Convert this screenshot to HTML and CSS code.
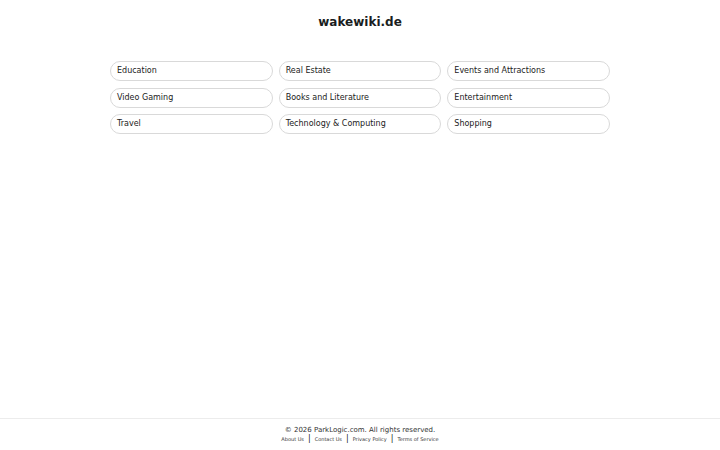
FILE: index.html
```html
<!DOCTYPE html>
<html lang="en">
  <head>
    <meta charset="UTF-8" />
    <meta name="viewport" content="width=device-width, initial-scale=1.0" />
    <title>wakewiki.de</title>
    <link rel="stylesheet" href="styles.css">
  </head>
  <body>
    <div class="page">
      <header class="header">
        <h1 class="domain">wakewiki.de</h1>
      </header>

      <main class="topics">
        <a class="topic" href="#">Education</a>
        <a class="topic" href="#">Real Estate</a>
        <a class="topic" href="#">Events and Attractions</a>
        <a class="topic" href="#">Video Gaming</a>
        <a class="topic" href="#">Books and Literature</a>
        <a class="topic" href="#">Entertainment</a>
        <a class="topic" href="#">Travel</a>
        <a class="topic" href="#">Technology &amp; Computing</a>
        <a class="topic" href="#">Shopping</a>
      </main>

      <footer class="footer">
        <p class="copyright">&copy; 2026 ParkLogic.com. All rights reserved.</p>
        <nav class="footer-links">
          <a href="#">About Us</a>
          <span class="sep">|</span>
          <a href="#">Contact Us</a>
          <span class="sep">|</span>
          <a href="#">Privacy Policy</a>
          <span class="sep">|</span>
          <a href="#">Terms of Service</a>
        </nav>
      </footer>
    </div>
  </body>
</html>
```

FILE: styles.css
```css
html,
body {
  height: 100%;
}
body {
  font-family: "DejaVu Sans", Verdana, sans-serif;
  margin: 0;
  padding: 0;
  color: #1f2328;
  background-color: #fff;
}
.page {
  display: flex;
  flex-direction: column;
  min-height: 100%;
}
.header {
  padding: 15px 0 0;
  text-align: center;
}
.domain {
  margin: 0;
  font-size: 12px;
  font-weight: bold;
  line-height: 15px;
  color: #1a1d21;
}
.topics {
  flex: 1;
  align-self: center;
  width: 500px;
  display: grid;
  grid-template-columns: repeat(3, 1fr);
  gap: 6.5px 6px;
  align-content: start;
  padding-top: 31px;
}
.topic {
  display: block;
  height: 20px;
  line-height: 18px;
  padding: 0 6px;
  border: 1px solid #d9d9d9;
  border-radius: 10px;
  font-size: 8px;
  color: #222;
  text-decoration: none;
  box-sizing: border-box;
}
.footer {
  border-top: 1px solid #ececec;
  padding: 7px 0;
  text-align: center;
}
.copyright {
  margin: 0;
  font-size: 7px;
  line-height: 9px;
  color: #333;
}
.footer-links {
  display: flex;
  justify-content: center;
  align-items: center;
  gap: 4px;
  font-size: 5px;
  line-height: 8px;
}
.footer-links a {
  color: #333;
  text-decoration: none;
}
.footer-links .sep {
  font-size: 8px;
  line-height: 8px;
  color: #222;
}
```
